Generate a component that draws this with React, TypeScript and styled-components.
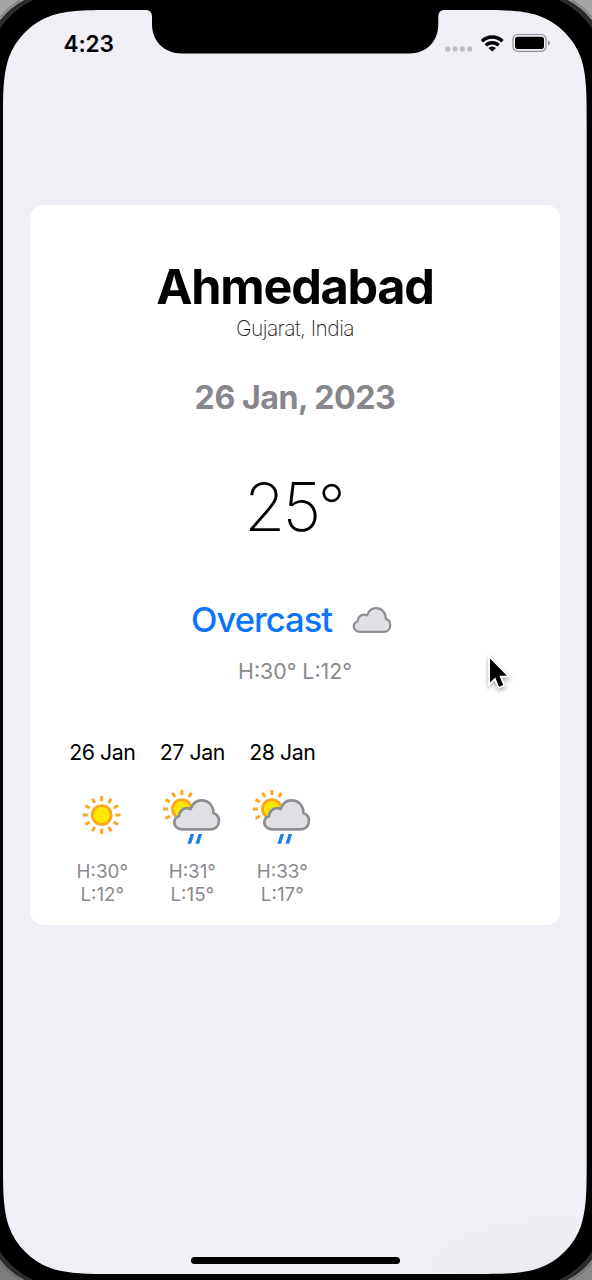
import React from "react";
import styled, { createGlobalStyle } from "styled-components";

const GlobalStyle = createGlobalStyle`
  *, *::before, *::after { box-sizing: border-box; }
  html, body { margin: 0; padding: 0; background: #000; }
  body { font-family: Inter, "Liberation Sans", sans-serif; -webkit-font-smoothing: antialiased; overflow: hidden; }
`;

const Device = styled.main`
  position: relative;
  width: 592px;
  height: 1280px;
  padding: 10px 5px 6px 3px;
  overflow: hidden;
  background: #000;
`;

const Screen = styled.div`
  display: flex;
  flex-direction: column;
  height: 1264px;
  background: radial-gradient(ellipse 150px 65px at 95% 100%, #e9e9ed 0, #f0eff6 100%);
`;

const Bezel = styled.svg`
  position: absolute;
  inset: 0;
  pointer-events: none;
`;

const StatusBar = styled.header`
  display: flex;
  justify-content: space-between;
  align-items: center;
  height: 66px;
  padding: 0 37.5px 0 60.5px;
`;

const Clock = styled.time`
  font-size: 22.7px;
  font-weight: 600;
  letter-spacing: -0.2px;
  color: #000;
`;

const StatusIcons = styled.div`
  display: flex;
  align-items: center;
`;

const Card = styled.section`
  display: flex;
  flex-direction: column;
  align-items: center;
  width: 530px;
  height: 720px;
  margin: 129px 0 0 27px;
  padding-top: 53px;
  border-radius: 14px;
  background: #fff;
`;

const City = styled.h1`
  margin: 0;
  font-size: 48.6px;
  line-height: 58px;
  font-weight: 700;
  letter-spacing: -1.25px;
  color: #000;
`;

const Region = styled.p`
  margin: 0;
  font-size: 21px;
  line-height: 26px;
  font-weight: 250;
  letter-spacing: -0.55px;
  color: #1c1c1e;
`;

const Today = styled.h2`
  margin: 36px 0 0;
  font-size: 32.2px;
  line-height: 40px;
  font-weight: 700;
  letter-spacing: -0.5px;
  color: #86868b;
`;

const Temperature = styled.div`
  margin: 49px 4px 0 0;
  font-size: 67px;
  line-height: 80px;
  font-weight: 160;
  letter-spacing: -3px;
  color: #000;
`;

const Degree = styled.span`
  font-size: 59px;
  line-height: 1;
  position: relative;
  top: -4px;
  -webkit-text-stroke: 0.3px #000;
`;

const Condition = styled.div`
  display: flex;
  align-items: center;
  gap: 20px;
  margin: 52px 7px 0 0;
  font-size: 34.5px;
  line-height: 42px;
  font-weight: 450;
  letter-spacing: -0.95px;
  color: #0a75fa;
`;

const Range = styled.p`
  margin: 17px 0 0;
  font-size: 21.3px;
  line-height: 26px;
  color: #8a8a8e;
`;

const Forecast = styled.div`
  display: flex;
  align-self: flex-start;
  margin: 55px 0 0 32.3px;
`;

const Day = styled.article`
  display: flex;
  flex-direction: column;
  align-items: center;
  width: 90px;
  margin-left: -5px;
  & + & { margin-left: 0; }
`;

const DayName = styled.h3`
  margin: 0 0 21px;
  font-size: 21.3px;
  line-height: 26px;
  font-weight: 400;
  letter-spacing: -0.45px;
  white-space: nowrap;
  color: #000;
`;

const DayTemp = styled.span`
  font-size: 18.8px;
  line-height: 23.4px;
  color: #8a8a8e;
`;

const WeatherSvg = styled.svg`
  display: block;
  margin-bottom: 14px;
`;

const HomeIndicator = styled.div`
  width: 209px;
  height: 7px;
  margin: auto 0 10.5px 188px;
  border-radius: 4px;
  background: #000;
`;

const Pointer = styled.svg`
  position: absolute;
  left: 480px;
  top: 650px;
  filter: drop-shadow(0 2px 2px rgba(0, 0, 0, 0.35));
`;

const CLOUD =
  "M20.5 43.3C16 43.3 12.7 40.2 12.7 36.6C12.7 33.5 14.7 31.1 17.5 30.3C17.6 25.6 21.1 22.2 25.1 22.2C26.5 22.2 27.8 22.5 29 23.1C30.8 17.6 34.9 14.3 39.8 14.3C47.2 14.3 52 20 51.9 27.3C55.2 28.2 57.3 31.2 57.3 34.8C57.3 40 54 43.3 49 43.3Z";

const FULL_RAYS = Array.from({ length: 12 }, (_, i) => i * 30);
const HALF_RAYS = [240, 270, 300, 330, 0, 30];

const Sun = ({ cx, cy, rays }: { cx: number; cy: number; rays: number[] }) => (
  <g transform={`translate(${cx} ${cy})`} stroke="#fba61c" fill="none">
    <circle r="9.4" fill="#fbe800" strokeWidth="2.8" />
    {rays.map((angle) => (
      <line key={angle} y1="-13.9" y2="-18.9" strokeWidth="3" transform={`rotate(${angle})`} />
    ))}
  </g>
);

const Cloud = () => <path d={CLOUD} fill="#e0e1e5" stroke="#8e8e92" strokeWidth="2.7" strokeLinejoin="round" />;

const SunnyIcon = () => (
  <WeatherSvg width="60" height="60" viewBox="0 0 60 60">
    <Sun cx={29.7} cy={29} rays={FULL_RAYS} />
  </WeatherSvg>
);

const SunRainIcon = () => (
  <WeatherSvg width="60" height="60" viewBox="0.4 0 60 60">
    <Sun cx={20.3} cy={23} rays={HALF_RAYS} />
    <Cloud />
    <path d="M29 48h3.6l-3.1 9.8h-3.7zM37 48h3.6l-3.1 9.8h-3.7z" fill="#1f7fe8" />
  </WeatherSvg>
);

const W = 583.7;
const H = 1264;
const R = 76;
const a = 1.528 * R, b = 1.088 * R, c = 0.868 * R, d = 0.631 * R, e = 0.0749 * R, f = 0.372 * R, g = 0.169 * R;
const SCREEN = `M${a} 0H${W - a}C${W - b} 0 ${W - c} 0 ${W - d} ${e}C${W - f} ${g} ${W - g} ${f} ${W - e} ${d}C${W} ${c} ${W} ${b} ${W} ${a}V${H - a}C${W} ${H - b} ${W} ${H - c} ${W - e} ${H - d}C${W - g} ${H - f} ${W - f} ${H - g} ${W - d} ${H - e}C${W - c} ${H} ${W - b} ${H} ${W - a} ${H}H${a}C${b} ${H} ${c} ${H} ${d} ${H - e}C${f} ${H - g} ${g} ${H - f} ${e} ${H - d}C0 ${H - c} 0 ${H - b} 0 ${H - a}V${a}C0 ${b} 0 ${c} ${e} ${d}C${g} ${f} ${f} ${g} ${d} ${e}C${c} 0 ${b} 0 ${a} 0Z`;

const Corner = ({ transform, metal = "#a5a5a5" }: { transform?: string; metal?: string }) => (
  <g transform={transform}>
    <path d="M0 0H33Q14 9 0 28Z" fill="#2c2c2c" />
    <path d="M0 0H24Q10 7 0 20Z" fill={metal} />
    <path d="M24 0Q10 7 0 20" fill="none" stroke="#777" strokeWidth="0.8" />
    <path d="M20 0Q9 6 0 17" fill="none" stroke="#555" strokeWidth="0.8" />
  </g>
);

const days = [
  { name: "26 Jan", high: 30, low: 12, rain: false },
  { name: "27 Jan", high: 31, low: 15, rain: true },
  { name: "28 Jan", high: 33, low: 17, rain: true },
];

export default function App() {
  return (
    <>
      <GlobalStyle />
      <Device>
        <Screen>
          <StatusBar>
            <Clock>4:23</Clock>
            <StatusIcons>
              <svg width="106" height="22" viewBox="444 32 106 22">
                {[445.3, 452.6, 459.9, 467.2].map((x) => (
                  <rect key={x} x={x} y="46.5" width="5" height="5" rx="1.8" fill="#bcbbc1" />
                ))}
                <path d="M482 41.2A14.6 14.6 0 0 1 502.4 41.2" fill="none" stroke="#000" strokeWidth="3.4" />
                <path d="M485.8 45.4A9 9 0 0 1 498.6 45.4" fill="none" stroke="#000" strokeWidth="3.3" />
                <path d="M492.2 51.6L488.4 48Q492.2 44.8 496 48Z" fill="#000" />
                <rect x="513" y="34.5" width="33" height="16.8" rx="4.8" fill="none" stroke="#8f8e94" strokeWidth="1.2" />
                <rect x="515" y="36.8" width="29" height="12.2" rx="2.8" fill="#000" />
                <path d="M548 40.3Q549.8 41 549.8 43T548 45.7Z" fill="#8f8e94" />
              </svg>
            </StatusIcons>
          </StatusBar>
          <Card>
            <City>Ahmedabad</City>
            <Region>Gujarat, India</Region>
            <Today>26 Jan, 2023</Today>
            <Temperature>
              25<Degree>°</Degree>
            </Temperature>
            <Condition>
              <span>Overcast</span>
              <svg width="40" height="28" viewBox="10.6 11.7 48.8 34.1">
                <Cloud />
              </svg>
            </Condition>
            <Range>H:30° L:12°</Range>
            <Forecast>
              {days.map((day) => (
                <Day key={day.name}>
                  <DayName>{day.name}</DayName>
                  {day.rain ? <SunRainIcon /> : <SunnyIcon />}
                  <DayTemp>H:{day.high}°</DayTemp>
                  <DayTemp>L:{day.low}°</DayTemp>
                </Day>
              ))}
            </Forecast>
          </Card>
          <HomeIndicator />
        </Screen>
        <Bezel width="592" height="1280" viewBox="0 0 592 1280">
          <path d={`M-10 -20H600V1280H-10Z${SCREEN}`} transform="translate(3 10)" fillRule="evenodd" fill="#000" />
          <path d="M143 9V10H146Q152 10 152 17V24C152 41 164 53.5 182 53.5H409C427 53.5 438.3 41 438.3 24V17Q438.3 10 444 10V9Z" />
          <Corner />
          <Corner transform="translate(592 0) scale(-1 1)" />
          <Corner transform="translate(0 1280) scale(1 -1)" metal="#7d7d7d" />
          <Corner transform="translate(592 1280) scale(-1 -1)" metal="#8a8a8a" />
        </Bezel>
        <Pointer width="34" height="44" viewBox="480 650 34 44">
          <path
            d="M490 658.5V682.5L495.3 677.5L499 686.7L503.2 685L499.3 675.8H507Z"
            fill="#000"
            stroke="#fff"
            strokeWidth="3.6"
            paintOrder="stroke"
          />
        </Pointer>
      </Device>
    </>
  );
}
